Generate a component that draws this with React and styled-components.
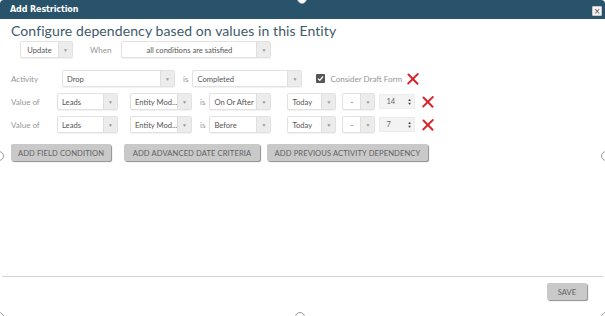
import React from 'react';
import styled, { createGlobalStyle } from 'styled-components';

const GlobalStyle = createGlobalStyle`
  html, body {
    margin: 0;
    padding: 0;
    background: #ffffff;
  }
  body {
    font-family: Lato, "Open Sans", sans-serif;
  }
`;

const Modal = styled.div`
  position: relative;
  width: 605px;
  height: 316px;
  display: flex;
  flex-direction: column;
  background: #fff;
  overflow: hidden;
`;

const TitleBar = styled.div`
  height: 19px;
  flex: 0 0 19px;
  background: #29536a;
  border-radius: 4px 4px 0 0;
  display: flex;
  align-items: center;
  justify-content: space-between;
  padding: 0 3px 0 10px;
`;

const Title = styled.span`
  color: #fff;
  font-family: "DejaVu Sans", sans-serif;
  font-weight: bold;
  font-size: 8px;
  letter-spacing: -0.1px;
`;

const CloseButton = styled.button`
  width: 10px;
  height: 10px;
  margin-top: 3px;
  padding: 0;
  border: 1px solid #c8c8c8;
  border-radius: 1px;
  background: #f4f4f4;
  color: #444;
  font-size: 8px;
  line-height: 7px;
  font-family: "DejaVu Sans", sans-serif;
  display: flex;
  align-items: center;
  justify-content: center;
`;

const Body = styled.div`
  flex: 1;
  padding: 3px 0 0 11px;
`;

const Heading = styled.h1`
  margin: 0;
  height: 18px;
  line-height: 18px;
  font-size: 14px;
  font-weight: 400;
  color: #3e5a6a;
  letter-spacing: 0.1px;
`;

const Row = styled.div`
  display: flex;
  align-items: center;
  height: 17px;
  margin-top: ${({ $mt }) => $mt}px;
  padding-left: ${({ $indent }) => $indent || 0}px;
`;

const Label = styled.span`
  font-size: 8px;
  color: #959595;
  width: ${({ $w }) => ($w ? `${$w}px` : 'auto')};
  margin-left: ${({ $ml }) => $ml || 0}px;
  flex: none;
`;

const SelectBox = styled.div`
  display: flex;
  width: ${({ $w }) => $w}px;
  height: 17px;
  margin-left: ${({ $ml }) => $ml || 0}px;
  box-sizing: border-box;
  border: 1px solid #e2e2e2;
  border-radius: 2px;
  background: #fff;
  box-shadow: 0 1px 1px rgba(0, 0, 0, 0.06);
  flex: none;
`;

const SelectText = styled.span`
  flex: 1;
  min-width: 0;
  display: flex;
  align-items: center;
  justify-content: ${({ $center }) => ($center ? 'center' : 'flex-start')};
  padding-left: ${({ $center }) => ($center ? 0 : 4)}px;
  font-size: 7.6px;
  color: #555;
  white-space: nowrap;
  overflow: hidden;
`;

const SelectArrow = styled.span`
  width: 13px;
  flex: none;
  background: #ececec;
  border-left: 1px solid #dedede;
  display: flex;
  align-items: center;
  justify-content: center;
  color: #999;
  font-size: 5px;
`;

const Select = ({ w, ml, center, children }) => (
  <SelectBox $w={w} $ml={ml}>
    <SelectText $center={center}>{children}</SelectText>
    <SelectArrow>▼</SelectArrow>
  </SelectBox>
);

const NumberBox = styled.div`
  display: flex;
  align-items: center;
  justify-content: space-between;
  width: 36px;
  height: 15px;
  margin-left: ${({ $ml }) => $ml || 0}px;
  box-sizing: border-box;
  padding: 0 3px 0 6px;
  background: #f3f3f3;
  border: 1px solid #ececec;
  font-size: 7.5px;
  color: #666;
  flex: none;
`;

const Spinner = styled.span`
  display: flex;
  flex-direction: column;
  font-size: 4px;
  line-height: 4px;
  color: #333;
`;

const CheckBox = styled.span`
  width: 9px;
  height: 9px;
  margin-left: ${({ $ml }) => $ml || 0}px;
  border-radius: 1px;
  background: #555;
  display: flex;
  align-items: center;
  justify-content: center;
  flex: none;
`;

const RemoveIcon = styled.svg`
  width: 12px;
  height: 12px;
  margin-left: ${({ $ml }) => $ml || 0}px;
  flex: none;
`;

const Remove = ({ ml }) => (
  <RemoveIcon $ml={ml} viewBox="0 0 12 12">
    <path d="M1.5 1.5 L10.5 10.8" stroke="#d8262b" strokeWidth="2" strokeLinecap="round" />
    <path d="M10.8 1 L1.2 10.5" stroke="#d8262b" strokeWidth="1.8" strokeLinecap="round" />
  </RemoveIcon>
);

const ButtonRow = styled.div`
  display: flex;
  margin-top: 11px;
`;

const GrayButton = styled.button`
  width: ${({ $w }) => $w}px;
  height: 17px;
  margin-left: ${({ $ml }) => $ml || 0}px;
  padding: 0;
  border: none;
  border-radius: 2px;
  background: #c9c9c9;
  box-shadow: 1px 1px 1px #8e8e8e;
  color: #636363;
  font-family: Lato, "Open Sans", sans-serif;
  font-size: 7.6px;
  font-weight: 400;
  text-transform: uppercase;
  letter-spacing: 0.1px;
  white-space: nowrap;
  flex: none;
`;

const Footer = styled.div`
  flex: 0 0 33px;
  margin: 0 2px;
  border-top: 1px solid #d4d4d4;
  display: flex;
  justify-content: flex-end;
  align-items: flex-start;
  padding: 6px 16px 0 0;
`;

const Handle = styled.span`
  position: absolute;
  width: 8px;
  height: 8px;
  border-radius: 50%;
  border: 1px solid #9a9a9a;
  background: #fff;
  left: ${({ $x }) => $x}px;
  top: ${({ $y }) => $y}px;
`;

const handles = [
  { x: 297, y: -6 },
  { x: -6, y: 151 },
  { x: 601, y: 151 },
  { x: -6, y: 312 },
  { x: 295, y: 312 },
  { x: 601, y: 312 },
];

export default function App() {
  return (
    <>
      <GlobalStyle />
      <Modal>
        <TitleBar>
          <Title>Add Restriction</Title>
          <CloseButton>×</CloseButton>
        </TitleBar>
        <Body>
          <Heading>Configure dependency based on values in this Entity</Heading>

          <Row $mt={1} $indent={9}>
            <Select w={53} center>Update</Select>
            <Label $ml={17}>When</Label>
            <Select w={150} ml={10} center>all conditions are satisfied</Select>
          </Row>

          <Row $mt={12}>
            <Label $w={51}>Activity</Label>
            <Select w={113}>Drop</Select>
            <Label $ml={8}>is</Label>
            <Select w={110} ml={4}>Completed</Select>
            <CheckBox $ml={14}>
              <svg width="7" height="7" viewBox="0 0 7 7">
                <path d="M1 3.6 L2.8 5.3 L6 1.5" stroke="#fff" strokeWidth="1.3" fill="none" />
              </svg>
            </CheckBox>
            <Label $ml={5}>Consider Draft Form</Label>
            <Remove ml={5} />
          </Row>

          {[
            { cond: 'On Or After', days: '14' },
            { cond: 'Before', days: '7' },
          ].map((r, i) => (
            <Row key={i} $mt={6}>
              <Label $w={46}>Value of</Label>
              <Select w={61}>Leads</Select>
              <Select w={62} ml={12}>Entity Mod...</Select>
              <Label $ml={8}>is</Label>
              <Select w={62} ml={4}>{r.cond}</Select>
              <Select w={49} ml={16}>Today</Select>
              <Select w={33} ml={6} center>-</Select>
              <NumberBox $ml={4}>
                {r.days}
                <Spinner>
                  <span>▲</span>
                  <span>▼</span>
                </Spinner>
              </NumberBox>
              <Remove ml={7} />
            </Row>
          ))}

          <ButtonRow>
            <GrayButton $w={100}>Add Field Condition</GrayButton>
            <GrayButton $w={136} $ml={13}>Add Advanced Date Criteria</GrayButton>
            <GrayButton $w={161} $ml={7}>Add Previous Activity Dependency</GrayButton>
          </ButtonRow>
        </Body>
        <Footer>
          <GrayButton $w={40}>Save</GrayButton>
        </Footer>
        {handles.map((h, i) => (
          <Handle key={i} $x={h.x} $y={h.y} />
        ))}
      </Modal>
    </>
  );
}
